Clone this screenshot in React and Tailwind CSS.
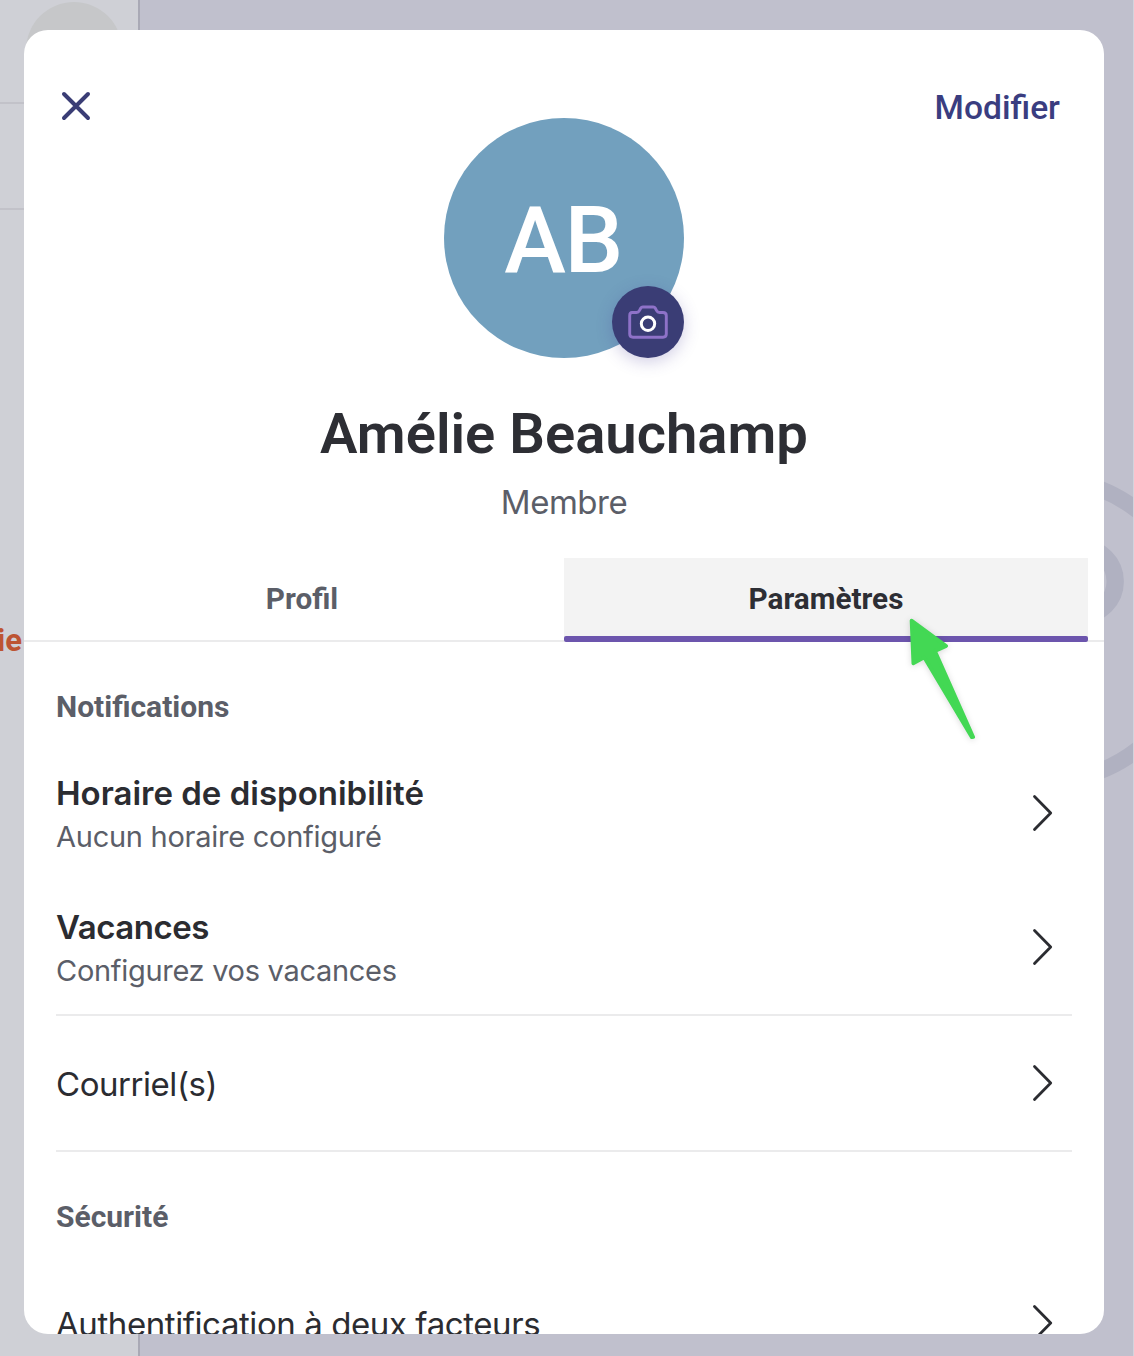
import React from "react";

function Chevron() {
  return (
    <svg width="24" height="40" viewBox="0 0 24 40" fill="none" className="mr-[18px] shrink-0">
      <path d="M4.5 3.5 20.7 20 4.5 36.5" stroke="#2b2c31" strokeWidth="2.8" strokeLinecap="round" strokeLinejoin="round" />
    </svg>
  );
}

function Row({ title, sub, subClass = "", titleClass = "", divider = false }) {
  return (
    <div className={divider ? "border-b-2 border-[#ebebec]" : ""}>
      <div className="flex h-[134px] items-center justify-between">
        <div className="pt-[3px]">
          <div className={`text-[33px] leading-[43px] whitespace-nowrap text-[#2b2c31] ${titleClass}`}>{title}</div>
          {sub && <div className={`text-[29px] leading-[43px] whitespace-nowrap text-[#5b5e68] ${subClass}`}>{sub}</div>}
        </div>
        <Chevron />
      </div>
    </div>
  );
}

function SectionTitle({ children }) {
  return (
    <h2 className="mt-[45px] mb-[19px] font-['Roboto',sans-serif] text-[30px] leading-10 font-bold text-[#5b5e68]">
      {children}
    </h2>
  );
}

function Backdrop() {
  return (
    <div className="flex h-full">
      <div className="relative w-[140px] shrink-0 overflow-hidden border-r-2 border-[#a9a9b5] bg-[#cfd0d6]">
        <div className="flex h-[104px] justify-center border-b-2 border-[#c2c2c9] pt-0.5 pl-2.5">
          <div className="size-24 rounded-full bg-[#c6c7c9]" />
        </div>
        <div className="h-[106px] border-b-2 border-[#c2c2c9]" />
        <div className="mt-[411px] ml-[-3px] font-['Roboto',sans-serif] text-[31px] leading-10 font-bold text-[#bd5433]">ie</div>
      </div>
      <div className="relative flex-1 overflow-hidden border-r border-[#d3d3dc] bg-[#c0c0cd]">
        <svg className="absolute top-[460px] right-0" width="140" height="340" viewBox="993 460 140 340" fill="none" stroke="#b0b1c1">
          <circle cx="1044" cy="630" r="151.8" strokeWidth="16.4" />
          <circle cx="1081.5" cy="581.5" r="33.7" strokeWidth="17.4" />
        </svg>
      </div>
    </div>
  );
}

export default function App() {
  return (
    <div className="relative h-[1356px] w-[1134px] overflow-hidden font-['Inter',sans-serif]">
      <Backdrop />
      <div className="absolute top-[30px] left-6 h-[1304px] w-[1080px] overflow-hidden rounded-[24px] bg-white">
        <div className="flex h-[328px] justify-between px-9 pt-[55px]">
          <div className="w-[140px] pt-[5px]">
            <svg width="32" height="32" viewBox="0 0 32 32" fill="none">
              <path d="M4 4 28 28M28 4 4 28" stroke="#3a3d75" strokeWidth="4" strokeLinecap="round" />
            </svg>
          </div>
          <div className="relative mt-[33px] flex size-60 shrink-0 items-center justify-center rounded-full bg-[#72a0be]">
            <span className="pt-1 pr-0.5 font-['Roboto',sans-serif] text-[93px] leading-none font-medium tracking-[-1.5px] text-white">AB</span>
            <div className="absolute right-0 bottom-0 flex size-[72px] items-center justify-center rounded-full bg-[#3a3d75] shadow-[0_4px_16px_rgba(70,60,150,0.25)]">
              <svg width="42" height="36" viewBox="0 0 42 36" fill="none">
                <path d="M5 8.5H9.5Q11.5 8.5 12.4 6.7L13.8 4Q14.4 3 15.8 3H26.2Q27.6 3 28.2 4L29.6 6.7Q30.5 8.5 32.5 8.5H36Q39.3 8.5 39.3 11.7V30Q39.3 33.2 36 33.2H6Q2.7 33.2 2.7 30V11.7Q2.7 8.5 5 8.5Z" stroke="#8e72c8" strokeWidth="2.9" strokeLinejoin="round" />
                <circle cx="21" cy="19.8" r="6.7" stroke="#fff" strokeWidth="3" />
              </svg>
            </div>
          </div>
          <button className="h-[46px] w-[140px] pr-2 text-right font-['Roboto',sans-serif] text-[33.6px] leading-[46px] font-medium whitespace-nowrap text-[#3a3d80]">Modifier</button>
        </div>

        <h1 className="mt-10 text-center font-['Roboto',sans-serif] text-[56.2px] leading-[72px] font-semibold text-[#2d2e34]">Amélie Beauchamp</h1>
        <p className="mt-3 text-center text-[33px] leading-10 tracking-[-0.5px] text-[#5b5e68]">Membre</p>

        <div className="relative mt-9 flex h-[84px] border-b-2 border-[#ebebec] px-4 font-['Roboto',sans-serif] text-[29.7px] leading-[82px] font-bold">
          <div className="flex-1 text-center text-[#5b5e68]">Profil</div>
          <div className="relative h-[84px] flex-1 bg-[#f3f3f3] text-center text-[#2d2e34]">
            Paramètres
            <div className="absolute inset-x-0 bottom-0 h-1.5 rounded-[2px] bg-[#6c55ad]" />
          </div>
        </div>

        <div className="px-8">
          <SectionTitle>Notifications</SectionTitle>
          <Row title="Horaire de disponibilité" titleClass="font-semibold" sub="Aucun horaire configuré" subClass="tracking-[-0.26px]" />
          <Row title="Vacances" titleClass="font-semibold tracking-[-0.45px]" sub="Configurez vos vacances" subClass="tracking-[-0.3px]" divider />
          <Row title="Courriel(s)" titleClass="tracking-[-0.45px]" divider />
          <SectionTitle>Sécurité</SectionTitle>
          <Row title="Authentification à deux facteurs" titleClass="tracking-[-0.42px]" />
        </div>
      </div>

      <svg className="absolute top-[610px] left-[900px] drop-shadow-[0_1px_3px_rgba(0,0,0,0.15)]" width="84" height="138" viewBox="900 610 84 138">
        <path d="M911.5 620.5 946.2 646 935 651 973.2 737 971.8 737.3 924.3 657.5 913.3 663.3Z" fill="#43d854" stroke="#43d854" strokeWidth="3.6" strokeLinejoin="round" />
      </svg>
    </div>
  );
}
